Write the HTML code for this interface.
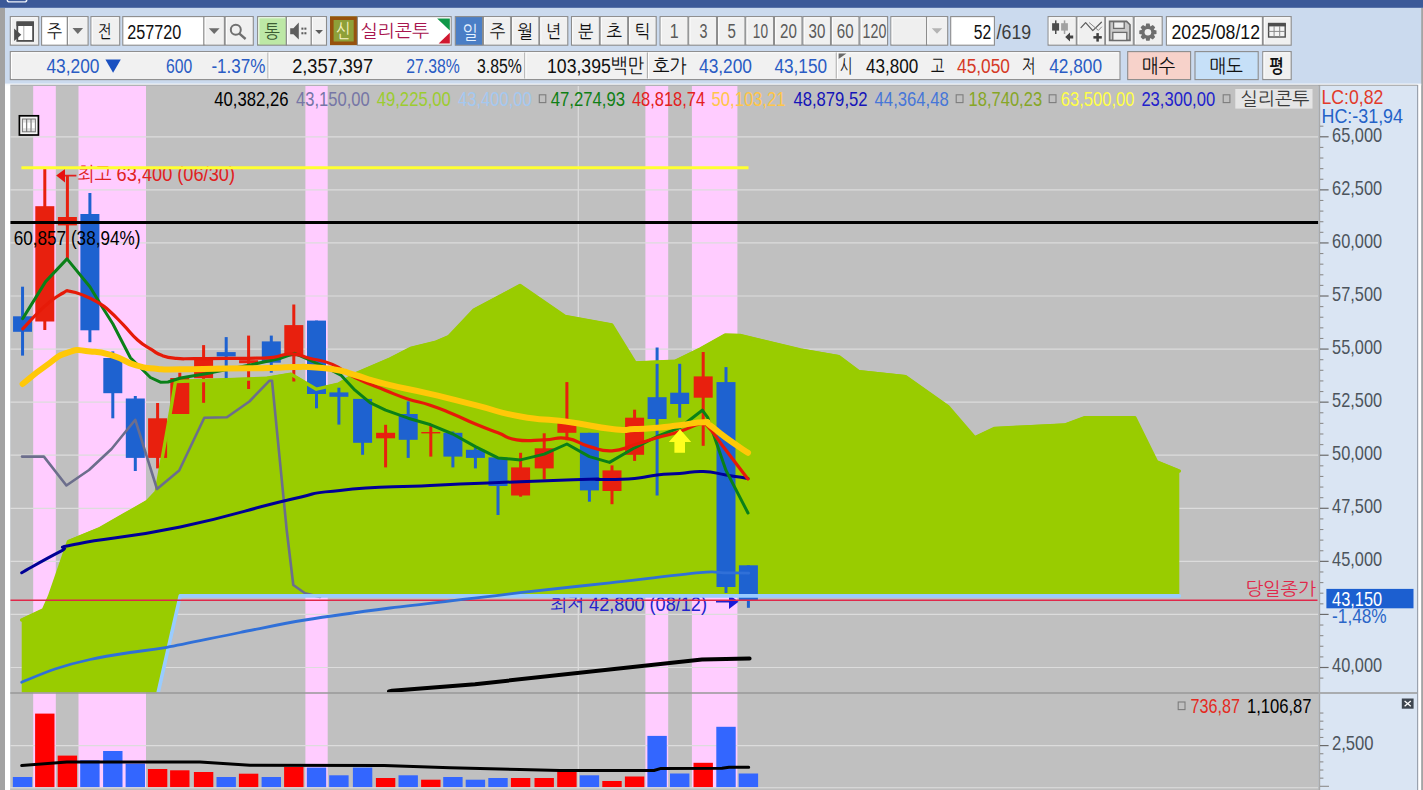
<!DOCTYPE html>
<html lang="ko"><head><meta charset="utf-8"><title>실리콘투 차트</title>
<style>
html,body{margin:0;padding:0;background:#c8d8ec;overflow:hidden}
svg{display:block;font-family:"Liberation Sans", "NanumGothic", sans-serif;}
text{white-space:pre}
</style></head><body>
<svg width="1423" height="790" viewBox="0 0 1423 790">
<rect x="0.00" y="0.00" width="1423.00" height="790.00" fill="#cbdaee" />
<rect x="0.00" y="0.00" width="1423.00" height="7.80" fill="#3b5998" />
<rect x="0.00" y="8.00" width="5.00" height="782.00" fill="#a2a2a2" />
<rect x="5.00" y="84.00" width="5.50" height="706.00" fill="#ffffff" />
<rect x="1417.60" y="84.00" width="3.80" height="706.00" fill="#ffffff" />
<rect x="1421.20" y="8.00" width="2.00" height="782.00" fill="#a4a4a4" />
<rect x="5.00" y="83.60" width="1416.20" height="1.80" fill="#f8fafd" />
<rect x="10.30" y="86.00" width="1308.20" height="704.00" fill="#c0c0c0" />
<rect x="1318.50" y="85.00" width="99.00" height="705.00" fill="#dae5f3" />
<rect x="33.20" y="86.00" width="22.60" height="701.30" fill="#ffccff" />
<rect x="78.50" y="86.00" width="67.50" height="701.30" fill="#ffccff" />
<rect x="305.40" y="86.00" width="22.30" height="701.30" fill="#ffccff" />
<rect x="645.40" y="86.00" width="22.80" height="701.30" fill="#ffccff" />
<rect x="691.90" y="86.00" width="45.50" height="701.30" fill="#ffccff" />
<line x1="10.30" y1="136.80" x2="1318.50" y2="136.80" stroke="#dcdcdc" stroke-width="1.2" />
<line x1="10.30" y1="189.87" x2="1318.50" y2="189.87" stroke="#dcdcdc" stroke-width="1.2" />
<line x1="10.30" y1="242.94" x2="1318.50" y2="242.94" stroke="#dcdcdc" stroke-width="1.2" />
<line x1="10.30" y1="296.01" x2="1318.50" y2="296.01" stroke="#dcdcdc" stroke-width="1.2" />
<line x1="10.30" y1="349.08" x2="1318.50" y2="349.08" stroke="#dcdcdc" stroke-width="1.2" />
<line x1="10.30" y1="402.15" x2="1318.50" y2="402.15" stroke="#dcdcdc" stroke-width="1.2" />
<line x1="10.30" y1="455.22" x2="1318.50" y2="455.22" stroke="#dcdcdc" stroke-width="1.2" />
<line x1="10.30" y1="508.29" x2="1318.50" y2="508.29" stroke="#dcdcdc" stroke-width="1.2" />
<line x1="10.30" y1="561.36" x2="1318.50" y2="561.36" stroke="#dcdcdc" stroke-width="1.2" />
<line x1="10.30" y1="614.43" x2="1318.50" y2="614.43" stroke="#dcdcdc" stroke-width="1.2" />
<line x1="10.30" y1="667.50" x2="1318.50" y2="667.50" stroke="#dcdcdc" stroke-width="1.2" />
<line x1="10.30" y1="745.60" x2="1318.50" y2="745.60" stroke="#dcdcdc" stroke-width="1.2" />
<line x1="578.30" y1="86.00" x2="578.30" y2="787.30" stroke="#dcdcdc" stroke-width="1.2" />
<clipPath id="pp"><rect x="10.3" y="86" width="1308.2" height="606.5"/></clipPath>
<g clip-path="url(#pp)">
<polygon points="21.7,618.5 43.4,608.4 49.4,595.0 68.4,540.0 100.0,527.0 123.5,513.6 146.8,500.3 156.2,490.3 170.2,411.8 175.5,380.0 267.0,376.8 291.0,372.7 316.4,387.7 338.4,382.7 355.0,372.6 390.0,357.6 410.5,347.0 435.0,341.0 449.0,335.0 474.0,308.5 520.0,284.0 565.0,315.0 611.8,323.4 635.2,361.5 675.2,359.8 700.3,347.5 725.3,333.6 740.0,334.0 800.4,348.4 838.8,355.1 858.8,370.1 905.5,375.1 948.0,405.2 974.7,436.2 994.7,426.9 1064.8,423.5 1084.8,416.2 1134.9,416.2 1156.6,460.2 1179.3,469.6 1179.3,595.7 180.2,595.7 158.5,691.0 150.0,730.0 21.7,730.0" fill="#99cc00" />
<text x="77.30" y="181.20" textLength="157.70" lengthAdjust="spacingAndGlyphs" font-size="19.6" fill="#e02020" >최고 63,400 (06/30)</text>
<polygon points="56.2,175.6 65.0,169.0 65.0,182.5" fill="#e81010" />
<line x1="65.00" y1="175.60" x2="76.40" y2="175.60" stroke="#e02020" stroke-width="1.6" />
<text x="550.00" y="610.80" textLength="157.00" lengthAdjust="spacingAndGlyphs" font-size="19.6" fill="#2222cc" >최저 42,800 (08/12)</text>
<line x1="716.00" y1="601.80" x2="730.00" y2="601.80" stroke="#2222cc" stroke-width="1.6" />
<polygon points="738.5,601.8 729.0,594.5 729.0,609.0" fill="#1a1ad8" />
<rect x="21.05" y="286.70" width="3.00" height="68.90" fill="#1e62d0" />
<rect x="13.05" y="316.30" width="19.00" height="15.50" fill="#1e62d0" />
<rect x="43.30" y="169.00" width="3.00" height="161.00" fill="#e8200e" />
<rect x="35.30" y="206.20" width="19.00" height="115.30" fill="#e8200e" />
<rect x="65.90" y="176.00" width="3.00" height="83.00" fill="#e8200e" />
<rect x="57.90" y="217.00" width="19.00" height="8.40" fill="#e8200e" />
<rect x="88.40" y="193.00" width="3.00" height="149.20" fill="#1e62d0" />
<rect x="80.40" y="214.00" width="19.00" height="116.30" fill="#1e62d0" />
<rect x="111.30" y="351.40" width="3.00" height="66.90" fill="#1e62d0" />
<rect x="103.30" y="358.00" width="19.00" height="35.20" fill="#1e62d0" />
<rect x="133.80" y="396.00" width="3.00" height="75.00" fill="#1e62d0" />
<rect x="125.80" y="398.50" width="19.00" height="59.40" fill="#1e62d0" />
<rect x="156.10" y="403.00" width="3.00" height="65.40" fill="#e8200e" />
<rect x="148.10" y="418.30" width="19.00" height="39.60" fill="#e8200e" />
<rect x="178.30" y="372.70" width="3.00" height="41.30" fill="#e8200e" />
<rect x="170.30" y="378.00" width="19.00" height="36.00" fill="#e8200e" />
<rect x="202.10" y="345.10" width="3.00" height="57.70" fill="#e8200e" />
<rect x="194.10" y="357.20" width="19.00" height="21.00" fill="#e8200e" />
<rect x="224.70" y="337.10" width="3.00" height="42.60" fill="#1e62d0" />
<rect x="216.70" y="352.10" width="19.00" height="4.30" fill="#1e62d0" />
<rect x="247.10" y="335.60" width="3.00" height="53.40" fill="#e8200e" />
<rect x="239.10" y="360.20" width="19.00" height="3.00" fill="#e8200e" />
<rect x="269.80" y="335.60" width="3.00" height="37.10" fill="#1e62d0" />
<rect x="261.80" y="341.40" width="19.00" height="21.30" fill="#1e62d0" />
<rect x="292.30" y="304.50" width="3.00" height="77.00" fill="#e8200e" />
<rect x="284.30" y="325.10" width="19.00" height="31.30" fill="#e8200e" />
<rect x="315.00" y="320.60" width="3.00" height="87.70" fill="#1e62d0" />
<rect x="307.00" y="320.60" width="19.00" height="73.40" fill="#1e62d0" />
<rect x="337.40" y="387.70" width="3.00" height="36.90" fill="#1e62d0" />
<rect x="329.40" y="392.40" width="19.00" height="4.40" fill="#1e62d0" />
<rect x="361.10" y="398.90" width="3.00" height="55.90" fill="#1e62d0" />
<rect x="353.10" y="398.90" width="19.00" height="43.90" fill="#1e62d0" />
<rect x="384.10" y="424.80" width="3.00" height="42.60" fill="#e8200e" />
<rect x="376.10" y="432.80" width="19.00" height="5.50" fill="#e8200e" />
<rect x="406.70" y="401.40" width="3.00" height="56.50" fill="#1e62d0" />
<rect x="398.70" y="414.00" width="19.00" height="25.80" fill="#1e62d0" />
<rect x="429.30" y="424.00" width="3.00" height="32.60" fill="#e8200e" />
<rect x="421.30" y="432.00" width="19.00" height="1.40" fill="#e8200e" />
<rect x="451.40" y="431.50" width="3.00" height="35.90" fill="#1e62d0" />
<rect x="443.40" y="432.80" width="19.00" height="23.80" fill="#1e62d0" />
<rect x="473.90" y="447.80" width="3.00" height="20.60" fill="#1e62d0" />
<rect x="465.90" y="449.80" width="19.00" height="8.10" fill="#1e62d0" />
<rect x="496.50" y="457.40" width="3.00" height="57.60" fill="#1e62d0" />
<rect x="488.50" y="457.40" width="19.00" height="28.60" fill="#1e62d0" />
<rect x="519.10" y="452.80" width="3.00" height="43.90" fill="#e8200e" />
<rect x="511.10" y="467.40" width="19.00" height="28.10" fill="#e8200e" />
<rect x="542.70" y="433.30" width="3.00" height="45.90" fill="#e8200e" />
<rect x="534.70" y="448.30" width="19.00" height="20.10" fill="#e8200e" />
<rect x="565.40" y="382.10" width="3.00" height="58.20" fill="#e8200e" />
<rect x="557.40" y="423.30" width="19.00" height="9.50" fill="#e8200e" />
<rect x="587.90" y="432.80" width="3.00" height="68.90" fill="#1e62d0" />
<rect x="579.90" y="432.80" width="19.00" height="57.60" fill="#1e62d0" />
<rect x="610.50" y="465.40" width="3.00" height="38.80" fill="#e8200e" />
<rect x="602.50" y="470.40" width="19.00" height="20.60" fill="#e8200e" />
<rect x="633.10" y="409.70" width="3.00" height="51.20" fill="#e8200e" />
<rect x="625.10" y="417.70" width="19.00" height="37.10" fill="#e8200e" />
<rect x="655.60" y="347.50" width="3.00" height="148.00" fill="#1e62d0" />
<rect x="647.60" y="397.20" width="19.00" height="21.80" fill="#1e62d0" />
<rect x="678.20" y="363.80" width="3.00" height="53.90" fill="#1e62d0" />
<rect x="670.20" y="392.70" width="19.00" height="11.30" fill="#1e62d0" />
<rect x="701.70" y="352.00" width="3.00" height="93.80" fill="#e8200e" />
<rect x="693.70" y="376.40" width="19.00" height="21.30" fill="#e8200e" />
<rect x="724.50" y="367.10" width="3.00" height="225.90" fill="#1e62d0" />
<rect x="716.50" y="382.10" width="19.00" height="204.90" fill="#1e62d0" />
<rect x="746.90" y="565.30" width="3.00" height="42.50" fill="#1e62d0" />
<rect x="738.90" y="565.30" width="19.00" height="35.20" fill="#1e62d0" />
<polyline points="21.7,620.0 43.4,609.9 49.4,596.5 68.4,541.5 100.0,528.5 123.5,515.1 146.8,501.8 156.2,491.8 170.2,413.3 175.5,381.5 267.0,378.3 291.0,374.2 316.4,389.2 338.4,384.2 355.0,374.1 390.0,359.1 410.5,348.5 435.0,342.5 449.0,336.5 474.0,310.0 520.0,285.5 565.0,316.5 611.8,324.9 635.2,363.0 675.2,361.3 700.3,349.0 725.3,335.1 740.0,335.5 800.4,349.9 838.8,356.6 858.8,371.6 905.5,376.6 948.0,406.7 974.7,437.7 994.7,428.4 1064.8,425.0 1084.8,417.7 1134.9,417.7 1156.6,461.7 1179.3,471.1" fill="none" stroke="#99cc00" stroke-width="3.4" stroke-linejoin="round" stroke-linecap="round" />
<polyline points="22.0,456.6 43.9,456.6 66.4,485.5 89.0,470.0 111.5,449.0 135.3,419.8 157.0,489.0 179.2,470.5 204.3,417.8 226.9,417.3 249.4,401.5 269.5,380.7 272.0,380.7 286.7,530.0 293.3,585.0 305.0,593.3 320.0,597.0" fill="none" stroke="#6c6e8c" stroke-width="2.6" stroke-linejoin="round" stroke-linecap="round" />
<polyline points="150.0,730.0 158.5,691.0 180.2,595.9 1179.3,595.9" fill="none" stroke="#99ccff" stroke-width="3.6" stroke-linejoin="round" stroke-linecap="round" stroke-linecap="butt"/>
<line x1="10.30" y1="600.30" x2="1317.50" y2="600.30" stroke="#e0284a" stroke-width="1.4" />
<path d="M21.7 682.2C27.2 680.0 43.6 672.8 55.0 669.0C66.4 665.2 77.6 662.2 90.1 659.5C102.6 656.8 117.2 654.5 130.0 652.5C142.8 650.5 148.6 650.6 166.9 647.3C185.2 644.0 217.0 637.0 240.0 632.5C263.0 628.0 280.0 624.1 305.0 620.0C330.0 615.9 361.8 611.6 390.0 608.0C418.2 604.4 452.6 600.8 474.3 598.2C496.0 595.7 497.4 595.3 520.0 592.7C542.6 590.1 580.0 586.1 610.0 582.8C640.0 579.4 681.0 574.3 700.0 572.6C719.0 570.9 715.9 572.7 724.0 572.8C732.1 572.9 744.6 573.1 748.7 573.2" fill="none" stroke="#3070d8" stroke-width="2.8" stroke-linejoin="round" stroke-linecap="round" />
<path d="M21.7 572.7C31.9 567.1 44.9 559.4 60.0 551.7C75.1 544.0 46.3 550.3 78.4 543.7C110.5 537.1 124.6 538.6 180.2 527.0C235.8 515.4 244.4 510.1 287.0 500.3C329.6 490.5 301.9 494.4 340.0 490.4C378.1 486.4 381.9 487.7 430.0 485.4C478.1 483.1 478.0 483.4 520.5 481.7C563.0 480.0 568.2 479.8 589.4 479.2C610.6 478.6 587.9 479.8 600.0 479.6C612.1 479.4 619.4 479.7 634.6 478.4C649.8 477.1 645.0 476.2 657.0 474.9C669.0 473.6 667.4 474.3 679.7 473.4C692.0 472.5 691.0 471.2 703.3 471.6C715.6 472.0 714.1 473.1 726.0 474.9C737.9 476.7 742.1 477.5 748.0 478.4" fill="none" stroke="#000096" stroke-width="3" stroke-linejoin="round" stroke-linecap="round" />
<polyline points="22.7,318.6 45.6,281.6 67.0,258.9 89.9,286.7 100.8,304.7 112.8,323.8 130.4,357.7 150.4,377.5 160.4,382.2 168.0,382.0 180.5,378.0 213.0,372.4 250.0,365.0 281.0,358.2 294.6,353.3 309.4,360.0 327.0,368.0 341.3,375.4 355.0,390.2 370.0,402.7 385.6,410.2 408.2,418.2 430.8,424.8 452.8,434.0 475.4,446.6 498.0,457.9 520.5,459.9 544.3,454.1 566.9,444.0 589.4,456.6 609.5,462.4 634.6,447.8 657.0,436.5 679.7,427.7 702.3,410.2 707.8,417.7 726.0,470.4 748.0,513.0" fill="none" stroke="#0a8018" stroke-width="3" stroke-linejoin="round" stroke-linecap="round" />
<path d="M22.8 328.8C28.8 322.6 34.7 315.1 45.4 305.6C56.1 296.1 56.5 296.8 63.1 293.0C69.7 289.2 64.5 290.7 70.2 291.4C75.9 292.1 76.8 292.7 84.4 295.7C92.0 298.7 92.0 298.8 98.6 302.8C105.2 306.8 102.6 304.8 109.2 310.7C115.8 316.6 115.8 317.1 123.4 324.9C131.0 332.7 130.1 333.4 137.6 340.0C145.1 346.6 145.1 345.5 151.7 349.7C158.3 353.9 155.7 353.3 162.3 355.6C168.9 357.9 168.0 357.6 176.5 358.4C185.0 359.2 181.1 358.6 194.2 358.6C207.3 358.6 209.1 358.5 225.6 358.4C242.1 358.3 243.3 358.5 256.0 358.2C268.7 357.9 263.8 358.5 273.3 357.3C282.8 356.1 282.1 353.6 291.7 353.8C301.3 354.0 298.5 355.4 309.4 358.2C320.3 361.0 320.3 359.2 332.5 364.4C344.7 369.6 341.0 370.7 355.0 377.6C369.0 384.5 370.9 384.5 385.0 390.2C399.1 395.9 395.6 394.9 407.7 398.9C419.8 402.9 418.2 401.2 430.2 405.2C442.2 409.2 440.7 409.0 452.8 414.0C464.9 419.0 463.3 419.0 475.4 424.0C487.5 429.0 487.0 428.6 498.0 432.8C509.0 437.0 504.4 437.9 516.7 439.8C529.0 441.7 530.9 440.2 544.3 439.8C557.7 439.4 554.9 436.5 566.9 438.3C578.9 440.1 577.4 443.3 589.4 446.6C601.4 449.9 599.9 451.3 612.0 450.8C624.1 450.3 622.6 448.3 634.6 444.8C646.6 441.3 645.0 441.3 657.0 437.8C669.0 434.3 668.2 435.2 679.7 431.5C691.2 427.8 692.5 425.3 700.0 424.0C707.5 422.7 700.9 419.5 707.8 426.5C714.7 433.5 715.3 436.3 726.0 450.3C736.7 464.3 742.1 471.4 748.0 479.1" fill="none" stroke="#e61a08" stroke-width="3.2" stroke-linejoin="round" stroke-linecap="round" />
<path d="M22.6 384.0C29.4 378.7 31.6 375.8 45.1 366.4C58.6 357.0 54.2 357.1 67.7 352.6C81.2 348.1 76.7 350.5 90.2 351.4C103.7 352.3 99.2 351.5 112.8 355.6C126.4 359.7 121.9 361.2 135.4 365.2C148.9 369.2 144.4 367.7 157.9 368.9C171.4 370.1 160.2 369.3 180.5 369.2C200.8 369.1 198.5 368.9 225.6 368.5C252.7 368.1 250.4 368.4 270.7 368.0C291.0 367.6 279.7 367.1 293.3 367.0C306.9 366.9 302.4 366.5 315.9 367.5C329.4 368.5 326.7 367.9 338.4 370.2C350.1 372.4 341.0 370.9 355.0 375.0C369.0 379.1 362.5 378.2 385.0 383.9C407.5 389.6 402.9 387.5 430.0 393.9C457.1 400.3 448.2 398.4 475.4 405.2C502.5 412.0 493.4 411.6 520.5 416.5C547.6 421.4 538.1 417.8 565.6 421.5C593.1 425.2 591.3 426.8 612.0 429.0C632.7 431.2 621.1 429.4 634.6 429.0C648.1 428.6 643.5 428.8 657.0 427.7C670.5 426.6 665.8 426.8 679.7 425.2C693.6 423.6 694.2 422.2 703.3 422.2C712.4 422.2 703.2 420.5 710.0 425.2C716.8 429.9 714.6 429.5 726.0 437.8C737.4 446.1 741.4 448.3 748.0 452.8" fill="none" stroke="#ffc808" stroke-width="6" stroke-linejoin="round" stroke-linecap="round" />
<polyline points="389.0,691.4 392.0,690.8 475.0,684.2 702.0,659.5 749.6,658.5" fill="none" stroke="#000000" stroke-width="4" stroke-linejoin="round" stroke-linecap="round" />
<polygon points="680.0,429.3 691.2,442.0 685.0,442.0 685.0,452.7 674.4,452.7 674.4,442.0 668.8,442.0" fill="#ffff1e" />
<line x1="21.40" y1="167.80" x2="748.50" y2="167.80" stroke="#ffff30" stroke-width="3" />
<line x1="10.30" y1="222.60" x2="1318.50" y2="222.60" stroke="#000000" stroke-width="3" />
<text x="13.70" y="245.20" textLength="126.80" lengthAdjust="spacingAndGlyphs" font-size="19.8" fill="#000000" >60,857 (38,94%)</text>
</g>
<line x1="10.30" y1="693.00" x2="1417.50" y2="693.00" stroke="#999999" stroke-width="1.3" />
<rect x="12.85" y="777.00" width="19.40" height="10.30" fill="#3366ff" />
<rect x="35.10" y="713.60" width="19.40" height="73.70" fill="#ff0000" />
<rect x="57.70" y="755.60" width="19.40" height="31.70" fill="#ff0000" />
<rect x="80.20" y="760.30" width="19.40" height="27.00" fill="#3366ff" />
<rect x="103.10" y="751.00" width="19.40" height="36.30" fill="#3366ff" />
<rect x="125.60" y="763.60" width="19.40" height="23.70" fill="#3366ff" />
<rect x="147.90" y="769.00" width="19.40" height="18.30" fill="#ff0000" />
<rect x="170.10" y="770.30" width="19.40" height="17.00" fill="#ff0000" />
<rect x="193.90" y="772.00" width="19.40" height="15.30" fill="#ff0000" />
<rect x="216.50" y="777.00" width="19.40" height="10.30" fill="#3366ff" />
<rect x="238.90" y="773.70" width="19.40" height="13.60" fill="#ff0000" />
<rect x="261.60" y="777.00" width="19.40" height="10.30" fill="#3366ff" />
<rect x="284.10" y="767.00" width="19.40" height="20.30" fill="#ff0000" />
<rect x="306.80" y="767.60" width="19.40" height="19.70" fill="#3366ff" />
<rect x="329.20" y="775.30" width="19.40" height="12.00" fill="#3366ff" />
<rect x="352.90" y="767.60" width="19.40" height="19.70" fill="#3366ff" />
<rect x="375.90" y="778.00" width="19.40" height="9.30" fill="#ff0000" />
<rect x="398.50" y="775.30" width="19.40" height="12.00" fill="#3366ff" />
<rect x="421.10" y="779.70" width="19.40" height="7.60" fill="#ff0000" />
<rect x="443.20" y="777.00" width="19.40" height="10.30" fill="#3366ff" />
<rect x="465.70" y="779.70" width="19.40" height="7.60" fill="#3366ff" />
<rect x="488.30" y="778.00" width="19.40" height="9.30" fill="#3366ff" />
<rect x="510.90" y="778.00" width="19.40" height="9.30" fill="#ff0000" />
<rect x="534.50" y="778.00" width="19.40" height="9.30" fill="#ff0000" />
<rect x="557.20" y="771.00" width="19.40" height="16.30" fill="#ff0000" />
<rect x="579.70" y="775.30" width="19.40" height="12.00" fill="#3366ff" />
<rect x="602.30" y="781.00" width="19.40" height="6.30" fill="#ff0000" />
<rect x="624.90" y="776.50" width="19.40" height="10.80" fill="#ff0000" />
<rect x="647.40" y="735.90" width="19.40" height="51.40" fill="#3366ff" />
<rect x="670.00" y="773.50" width="19.40" height="13.80" fill="#3366ff" />
<rect x="693.50" y="762.80" width="19.40" height="24.50" fill="#ff0000" />
<rect x="716.30" y="726.80" width="19.40" height="60.50" fill="#3366ff" />
<rect x="738.70" y="773.50" width="19.40" height="13.80" fill="#3366ff" />
<polyline points="21.7,765.6 66.8,762.0 200.0,762.0 250.0,765.3 384.0,765.6 450.0,767.8 520.0,769.4 560.0,770.4 654.0,770.5 661.0,768.4 722.0,768.3 729.0,767.2 748.7,767.2" fill="none" stroke="#000000" stroke-width="3" stroke-linejoin="round" stroke-linecap="round" />
<line x1="10.30" y1="787.90" x2="1318.50" y2="787.90" stroke="#dedede" stroke-width="1.2" />
<rect x="10.30" y="788.60" width="1308.20" height="2.00" fill="#bcbcbc" />
<rect x="10.30" y="16.60" width="28.40" height="28.60" fill="#f0f0f0" stroke="#8c8c8c" stroke-width="1.1" />
<path d="M11.50 44.00V17.80H37.50" fill="none" stroke="#ffffff" stroke-width="1.1" opacity="0.85"/>
<rect x="17.30" y="22.30" width="15.80" height="18.60" fill="#ffffff" stroke="#4e4e4e" stroke-width="1.8" />
<rect x="16.60" y="21.60" width="17.20" height="4.40" fill="#4e4e4e" />
<line x1="23.80" y1="26.00" x2="23.80" y2="40.00" stroke="#b0b0b0" stroke-width="1" />
<polygon points="14.1,28.4 21.3,34.8 14.1,41.1" fill="#4e4e4e" />
<rect x="41.60" y="16.60" width="25.80" height="28.60" fill="#ffffff" stroke="#8c8c8c" stroke-width="1.1" />
<text x="46.80" y="38.00" textLength="15.20" lengthAdjust="spacingAndGlyphs" font-size="18.2" fill="#101010" >주</text>
<rect x="67.40" y="16.60" width="20.70" height="28.60" fill="#f0f0f0" stroke="#8c8c8c" stroke-width="1.1" />
<path d="M68.60 44.00V17.80H86.90" fill="none" stroke="#ffffff" stroke-width="1.1" opacity="0.85"/>
<polygon points="72.5,28.1 83.1,28.1 77.8,33.9" fill="#6c6c6c" />
<rect x="91.00" y="16.60" width="28.70" height="28.60" fill="#f0f0f0" stroke="#8c8c8c" stroke-width="1.1" />
<path d="M92.20 44.00V17.80H118.50" fill="none" stroke="#ffffff" stroke-width="1.1" opacity="0.85"/>
<text x="98.20" y="38.30" textLength="13.50" lengthAdjust="spacingAndGlyphs" font-size="18.2" fill="#101010" >전</text>
<rect x="122.80" y="16.60" width="81.20" height="28.60" fill="#ffffff" stroke="#8c8c8c" stroke-width="1.1" />
<text x="127.30" y="38.50" textLength="54.00" lengthAdjust="spacingAndGlyphs" font-size="20" fill="#101010" >257720</text>
<rect x="204.00" y="16.60" width="20.40" height="28.60" fill="#f0f0f0" stroke="#8c8c8c" stroke-width="1.1" />
<path d="M205.20 44.00V17.80H223.20" fill="none" stroke="#ffffff" stroke-width="1.1" opacity="0.85"/>
<polygon points="208.8,28.2 219.6,28.2 214.2,34.0" fill="#6c6c6c" />
<rect x="225.20" y="16.60" width="28.10" height="28.60" fill="#f0f0f0" stroke="#8c8c8c" stroke-width="1.1" />
<path d="M226.40 44.00V17.80H252.10" fill="none" stroke="#ffffff" stroke-width="1.1" opacity="0.85"/>
<circle cx="235.8" cy="29.8" r="5" fill="none" stroke="#707070" stroke-width="2"/>
<line x1="239.40" y1="33.60" x2="245.60" y2="39.00" stroke="#707070" stroke-width="2.4" />
<rect x="257.60" y="16.60" width="28.80" height="28.60" fill="#bde8a6" stroke="#8c8c8c" stroke-width="1.1" />
<path d="M258.80 44.00V17.80H285.20" fill="none" stroke="#ffffff" stroke-width="1.1" opacity="0.85"/>
<text x="264.30" y="37.80" textLength="15.50" lengthAdjust="spacingAndGlyphs" font-size="18.2" fill="#3c5c34" >통</text>
<rect x="286.40" y="16.60" width="24.90" height="28.60" fill="#f0f0f0" stroke="#8c8c8c" stroke-width="1.1" />
<path d="M287.60 44.00V17.80H310.10" fill="none" stroke="#ffffff" stroke-width="1.1" opacity="0.85"/>
<polygon points="290.2,28.2 293.4,28.2 298.8,22.6 298.8,39.6 293.4,34.2 290.2,34.2" fill="#5e5e5e" />
<rect x="301.40" y="27.60" width="2.00" height="2.10" fill="#5e5e5e" />
<rect x="304.40" y="27.60" width="2.00" height="2.10" fill="#5e5e5e" />
<rect x="301.40" y="32.20" width="2.00" height="2.10" fill="#5e5e5e" />
<rect x="304.40" y="32.20" width="2.00" height="2.10" fill="#5e5e5e" />
<rect x="311.30" y="16.60" width="15.20" height="28.60" fill="#f0f0f0" stroke="#8c8c8c" stroke-width="1.1" />
<path d="M312.50 44.00V17.80H325.30" fill="none" stroke="#ffffff" stroke-width="1.1" opacity="0.85"/>
<polygon points="315.2,29.9 323.0,29.9 319.1,34.1" fill="#5c5c5c" />
<rect x="330.00" y="16.40" width="27.30" height="28.70" fill="#8ea038" />
<rect x="331.80" y="18.20" width="23.70" height="25.10" fill="none" stroke="#96520e" stroke-width="3.6" />
<text x="336.10" y="37.50" textLength="14.20" lengthAdjust="spacingAndGlyphs" font-size="19.6" fill="#f6f2c4" >신</text>
<rect x="357.40" y="16.60" width="93.80" height="28.60" fill="#ffffff" stroke="#8c8c8c" stroke-width="1.1" />
<text x="360.40" y="36.70" textLength="68.90" lengthAdjust="spacingAndGlyphs" font-size="17.4" fill="#a8144e" >실리콘투</text>
<polygon points="437.1,18.6 449.8,18.6 449.8,30.6" fill="#109848" />
<polygon points="449.8,32.8 449.8,43.4 438.6,43.4" fill="#d01830" />
<rect x="455.30" y="16.60" width="27.30" height="28.60" fill="#4a7ec6" stroke="#8c8c8c" stroke-width="1.1" />
<text x="462.40" y="38.60" textLength="15.20" lengthAdjust="spacingAndGlyphs" font-size="18.6" fill="#e6f2ff" >일</text>
<rect x="483.40" y="16.60" width="27.30" height="28.60" fill="#f0f0f0" stroke="#8c8c8c" stroke-width="1.1" />
<path d="M484.60 44.00V17.80H509.50" fill="none" stroke="#ffffff" stroke-width="1.1" opacity="0.85"/>
<text x="489.40" y="37.90" textLength="15.70" lengthAdjust="spacingAndGlyphs" font-size="18.2" fill="#101010" >주</text>
<rect x="511.50" y="16.60" width="27.40" height="28.60" fill="#f0f0f0" stroke="#8c8c8c" stroke-width="1.1" />
<path d="M512.70 44.00V17.80H537.70" fill="none" stroke="#ffffff" stroke-width="1.1" opacity="0.85"/>
<text x="517.50" y="37.90" textLength="15.70" lengthAdjust="spacingAndGlyphs" font-size="18.2" fill="#101010" >월</text>
<rect x="539.60" y="16.60" width="28.20" height="28.60" fill="#f0f0f0" stroke="#8c8c8c" stroke-width="1.1" />
<path d="M540.80 44.00V17.80H566.60" fill="none" stroke="#ffffff" stroke-width="1.1" opacity="0.85"/>
<text x="546.00" y="37.90" textLength="15.50" lengthAdjust="spacingAndGlyphs" font-size="18.2" fill="#101010" >년</text>
<rect x="571.50" y="16.60" width="27.90" height="28.60" fill="#f0f0f0" stroke="#8c8c8c" stroke-width="1.1" />
<path d="M572.70 44.00V17.80H598.20" fill="none" stroke="#ffffff" stroke-width="1.1" opacity="0.85"/>
<text x="577.70" y="37.90" textLength="15.50" lengthAdjust="spacingAndGlyphs" font-size="18.2" fill="#101010" >분</text>
<rect x="600.20" y="16.60" width="27.50" height="28.60" fill="#f0f0f0" stroke="#8c8c8c" stroke-width="1.1" />
<path d="M601.40 44.00V17.80H626.50" fill="none" stroke="#ffffff" stroke-width="1.1" opacity="0.85"/>
<text x="606.30" y="37.90" textLength="15.60" lengthAdjust="spacingAndGlyphs" font-size="18.2" fill="#101010" >초</text>
<rect x="628.50" y="16.60" width="27.70" height="28.60" fill="#f0f0f0" stroke="#8c8c8c" stroke-width="1.1" />
<path d="M629.70 44.00V17.80H655.00" fill="none" stroke="#ffffff" stroke-width="1.1" opacity="0.85"/>
<text x="634.60" y="37.90" textLength="15.60" lengthAdjust="spacingAndGlyphs" font-size="18.2" fill="#101010" >틱</text>
<rect x="660.10" y="16.60" width="27.90" height="28.60" fill="#f0f0f0" stroke="#8c8c8c" stroke-width="1.1" />
<path d="M661.30 44.00V17.80H686.80" fill="none" stroke="#ffffff" stroke-width="1.1" opacity="0.85"/>
<text x="674.10" y="38.4" text-anchor="middle" font-size="19.6" fill="#5a5a5a" transform="translate(121.45 0) scale(0.82 1)">1</text>
<rect x="688.80" y="16.60" width="27.80" height="28.60" fill="#f0f0f0" stroke="#8c8c8c" stroke-width="1.1" />
<path d="M690.00 44.00V17.80H715.40" fill="none" stroke="#ffffff" stroke-width="1.1" opacity="0.85"/>
<text x="699.40" y="38.40" textLength="8.00" lengthAdjust="spacingAndGlyphs" font-size="19.6" fill="#5a5a5a" >3</text>
<rect x="717.50" y="16.60" width="27.50" height="28.60" fill="#f0f0f0" stroke="#8c8c8c" stroke-width="1.1" />
<path d="M718.70 44.00V17.80H743.80" fill="none" stroke="#ffffff" stroke-width="1.1" opacity="0.85"/>
<text x="727.60" y="38.40" textLength="8.40" lengthAdjust="spacingAndGlyphs" font-size="19.6" fill="#5a5a5a" >5</text>
<rect x="745.80" y="16.60" width="27.80" height="28.60" fill="#f0f0f0" stroke="#8c8c8c" stroke-width="1.1" />
<path d="M747.00 44.00V17.80H772.40" fill="none" stroke="#ffffff" stroke-width="1.1" opacity="0.85"/>
<text x="752.80" y="38.40" textLength="15.20" lengthAdjust="spacingAndGlyphs" font-size="19.6" fill="#5a5a5a" >10</text>
<rect x="774.50" y="16.60" width="27.50" height="28.60" fill="#f0f0f0" stroke="#8c8c8c" stroke-width="1.1" />
<path d="M775.70 44.00V17.80H800.80" fill="none" stroke="#ffffff" stroke-width="1.1" opacity="0.85"/>
<text x="780.00" y="38.40" textLength="16.80" lengthAdjust="spacingAndGlyphs" font-size="19.6" fill="#5a5a5a" >20</text>
<rect x="803.00" y="16.60" width="27.50" height="28.60" fill="#f0f0f0" stroke="#8c8c8c" stroke-width="1.1" />
<path d="M804.20 44.00V17.80H829.30" fill="none" stroke="#ffffff" stroke-width="1.1" opacity="0.85"/>
<text x="808.60" y="38.40" textLength="16.80" lengthAdjust="spacingAndGlyphs" font-size="19.6" fill="#5a5a5a" >30</text>
<rect x="831.30" y="16.60" width="27.70" height="28.60" fill="#f0f0f0" stroke="#8c8c8c" stroke-width="1.1" />
<path d="M832.50 44.00V17.80H857.80" fill="none" stroke="#ffffff" stroke-width="1.1" opacity="0.85"/>
<text x="836.80" y="38.40" textLength="16.80" lengthAdjust="spacingAndGlyphs" font-size="19.6" fill="#5a5a5a" >60</text>
<rect x="860.00" y="16.60" width="27.60" height="28.60" fill="#f0f0f0" stroke="#8c8c8c" stroke-width="1.1" />
<path d="M861.20 44.00V17.80H886.40" fill="none" stroke="#ffffff" stroke-width="1.1" opacity="0.85"/>
<text x="862.60" y="38.40" textLength="23.80" lengthAdjust="spacingAndGlyphs" font-size="19.6" fill="#5a5a5a" >120</text>
<rect x="890.90" y="16.60" width="35.70" height="28.60" fill="#efefef" stroke="#8c8c8c" stroke-width="1.1" />
<path d="M892.10 44.00V17.80H925.40" fill="none" stroke="#ffffff" stroke-width="1.1" opacity="0.85"/>
<rect x="926.60" y="16.60" width="21.10" height="28.60" fill="#f0f0f0" stroke="#8c8c8c" stroke-width="1.1" />
<path d="M927.80 44.00V17.80H946.50" fill="none" stroke="#ffffff" stroke-width="1.1" opacity="0.85"/>
<polygon points="931.8,28.2 942.2,28.2 937.0,33.8" fill="#b4b4b4" />
<rect x="950.70" y="16.60" width="43.70" height="28.60" fill="#ffffff" stroke="#8c8c8c" stroke-width="1.1" />
<text x="973.80" y="38.50" textLength="17.40" lengthAdjust="spacingAndGlyphs" font-size="20" fill="#101010" >52</text>
<text x="996.60" y="38.50" textLength="34.60" lengthAdjust="spacingAndGlyphs" font-size="20" fill="#3c3c3c" >/619</text>
<rect x="1048.10" y="16.60" width="28.20" height="28.60" fill="#f0f0f0" stroke="#8c8c8c" stroke-width="1.1" />
<path d="M1049.30 44.00V17.80H1075.10" fill="none" stroke="#ffffff" stroke-width="1.1" opacity="0.85"/>
<rect x="1052.10" y="23.20" width="7.00" height="7.40" fill="#4c4c4c" />
<rect x="1055.00" y="20.40" width="1.50" height="13.60" fill="#4c4c4c" />
<rect x="1061.10" y="23.20" width="6.80" height="7.40" fill="#a2a2a2" />
<rect x="1063.80" y="20.40" width="1.50" height="13.60" fill="#a2a2a2" />
<polygon points="1065.2,37.0 1070.0,32.6 1070.0,35.4 1073.2,35.4 1073.2,38.6 1070.0,38.6 1070.0,41.4" fill="#444444" />
<rect x="1077.00" y="16.60" width="27.80" height="28.60" fill="#f0f0f0" stroke="#8c8c8c" stroke-width="1.1" />
<path d="M1078.20 44.00V17.80H1103.60" fill="none" stroke="#ffffff" stroke-width="1.1" opacity="0.85"/>
<polyline points="1081.0,27.6 1085.6,22.6 1092.8,30.6 1101.4,22.2" fill="none" stroke="#5a5a5a" stroke-width="1.2" stroke-linejoin="round" stroke-linecap="round" />
<polyline points="1089.4,22.8 1098.4,30.4 1101.6,27.0" fill="none" stroke="#8a8a8a" stroke-width="1" stroke-linejoin="round" stroke-linecap="round" />
<rect x="1093.40" y="36.10" width="8.40" height="2.50" fill="#3e3e3e" />
<rect x="1096.35" y="33.10" width="2.50" height="8.50" fill="#3e3e3e" />
<rect x="1105.60" y="16.60" width="27.70" height="28.60" fill="#f0f0f0" stroke="#8c8c8c" stroke-width="1.1" />
<path d="M1106.80 44.00V17.80H1132.10" fill="none" stroke="#ffffff" stroke-width="1.1" opacity="0.85"/>
<path d="M1109.6 21.4H1126.6L1130 24.8V40.4H1109.6Z" fill="#c9c9c9" stroke="#6c6c6c" stroke-width="1.6"/>
<rect x="1113.60" y="21.80" width="10.60" height="6.60" fill="#f0f0f0" stroke="#6c6c6c" stroke-width="1.3" />
<rect x="1112.80" y="32.40" width="14.00" height="8.00" fill="#f0f0f0" stroke="#6c6c6c" stroke-width="1.3" />
<rect x="1134.20" y="16.60" width="28.00" height="28.60" fill="#f0f0f0" stroke="#8c8c8c" stroke-width="1.1" />
<path d="M1135.40 44.00V17.80H1161.00" fill="none" stroke="#ffffff" stroke-width="1.1" opacity="0.85"/>
<polygon points="1156.5,30.5 1156.5,33.9 1153.7,34.6 1153.7,34.6 1155.2,37.1 1152.8,39.5 1150.3,38.0 1150.3,38.0 1149.6,40.8 1146.2,40.8 1145.5,38.0 1145.5,38.0 1143.0,39.5 1140.6,37.1 1142.1,34.6 1142.1,34.6 1139.3,33.9 1139.3,30.5 1142.1,29.8 1142.1,29.8 1140.6,27.3 1143.0,24.9 1145.5,26.4 1145.5,26.4 1146.2,23.6 1149.6,23.6 1150.3,26.4 1150.3,26.4 1152.8,24.9 1155.2,27.3 1153.7,29.8 1153.7,29.8" fill="#6e6e6e" />
<circle cx="1147.9" cy="32.2" r="3.3" fill="#f0f0f0"/>
<rect x="1166.40" y="16.60" width="96.00" height="28.60" fill="#ffffff" stroke="#8c8c8c" stroke-width="1.1" />
<text x="1171.50" y="38.50" textLength="88.50" lengthAdjust="spacingAndGlyphs" font-size="20" fill="#101010" >2025/08/12</text>
<rect x="1263.20" y="16.60" width="28.00" height="28.60" fill="#f0f0f0" stroke="#8c8c8c" stroke-width="1.1" />
<path d="M1264.40 44.00V17.80H1290.00" fill="none" stroke="#ffffff" stroke-width="1.1" opacity="0.85"/>
<rect x="1268.60" y="24.00" width="16.60" height="13.00" fill="#f4f4f4" stroke="#4e4e4e" stroke-width="1.4" />
<rect x="1268.00" y="22.80" width="17.80" height="3.60" fill="#4e4e4e" />
<line x1="1274.10" y1="26.00" x2="1274.10" y2="37.00" stroke="#8a8a8a" stroke-width="1" />
<line x1="1279.70" y1="26.00" x2="1279.70" y2="37.00" stroke="#8a8a8a" stroke-width="1" />
<line x1="1268.60" y1="31.40" x2="1285.20" y2="31.40" stroke="#8a8a8a" stroke-width="1" />
<rect x="10.30" y="51.60" width="1109.70" height="28.00" fill="#f1f1f1" stroke="#8c8c8c" stroke-width="1.1" />
<path d="M11.5 78.39999999999999V52.800000000000004H1118.8" fill="none" stroke="#ffffff" stroke-width="1.1"/>
<line x1="268.00" y1="52.60" x2="268.00" y2="78.60" stroke="#a8a8a8" stroke-width="1.1" />
<line x1="269.10" y1="52.60" x2="269.10" y2="78.60" stroke="#ffffff" stroke-width="1.1" />
<line x1="524.80" y1="52.60" x2="524.80" y2="78.60" stroke="#a8a8a8" stroke-width="1.1" />
<line x1="525.90" y1="52.60" x2="525.90" y2="78.60" stroke="#ffffff" stroke-width="1.1" />
<line x1="647.40" y1="52.60" x2="647.40" y2="78.60" stroke="#a8a8a8" stroke-width="1.1" />
<line x1="648.50" y1="52.60" x2="648.50" y2="78.60" stroke="#ffffff" stroke-width="1.1" />
<line x1="836.30" y1="52.60" x2="836.30" y2="78.60" stroke="#a8a8a8" stroke-width="1.1" />
<line x1="837.40" y1="52.60" x2="837.40" y2="78.60" stroke="#ffffff" stroke-width="1.1" />
<text x="46.40" y="72.60" textLength="53.10" lengthAdjust="spacingAndGlyphs" font-size="20" fill="#2a5cc4" >43,200</text>
<polygon points="105.4,59.6 120.8,59.6 113.1,72.8" fill="#1a50c0" />
<text x="166.00" y="72.60" textLength="26.20" lengthAdjust="spacingAndGlyphs" font-size="20" fill="#2a5cc4" >600</text>
<text x="211.40" y="72.60" textLength="54.10" lengthAdjust="spacingAndGlyphs" font-size="20" fill="#2a5cc4" >-1.37%</text>
<text x="292.20" y="72.60" textLength="80.90" lengthAdjust="spacingAndGlyphs" font-size="20" fill="#101010" >2,357,397</text>
<text x="406.30" y="72.60" textLength="53.50" lengthAdjust="spacingAndGlyphs" font-size="20" fill="#2a5cc4" >27.38%</text>
<text x="477.00" y="72.60" textLength="44.80" lengthAdjust="spacingAndGlyphs" font-size="20" fill="#101010" >3.85%</text>
<text x="547.00" y="72.60" textLength="97.00" lengthAdjust="spacingAndGlyphs" font-size="20" fill="#101010" >103,395백만</text>
<text x="652.50" y="72.50" textLength="33.80" lengthAdjust="spacingAndGlyphs" font-size="19.2" fill="#101010" >호가</text>
<text x="699.00" y="72.60" textLength="53.00" lengthAdjust="spacingAndGlyphs" font-size="20" fill="#2a5cc4" >43,200</text>
<text x="774.50" y="72.60" textLength="52.50" lengthAdjust="spacingAndGlyphs" font-size="20" fill="#2a5cc4" >43,150</text>
<polygon points="838.6,53.6 846.4,53.6 838.6,59.0" fill="#6a6a6a" />
<text x="839.70" y="72.50" textLength="12.70" lengthAdjust="spacingAndGlyphs" font-size="19.2" fill="#101010" >시</text>
<text x="865.90" y="72.60" textLength="52.30" lengthAdjust="spacingAndGlyphs" font-size="20" fill="#101010" >43,800</text>
<text x="930.80" y="72.50" textLength="13.50" lengthAdjust="spacingAndGlyphs" font-size="19.2" fill="#101010" >고</text>
<text x="957.00" y="72.60" textLength="53.00" lengthAdjust="spacingAndGlyphs" font-size="20" fill="#d63a26" >45,050</text>
<text x="1021.90" y="72.50" textLength="13.50" lengthAdjust="spacingAndGlyphs" font-size="19.2" fill="#101010" >저</text>
<text x="1049.20" y="72.60" textLength="52.80" lengthAdjust="spacingAndGlyphs" font-size="20" fill="#2a5cc4" >42,800</text>
<rect x="1127.70" y="51.60" width="62.90" height="28.00" fill="#f7d2ca" stroke="#8c8c8c" stroke-width="1.1" />
<text x="1141.70" y="73.00" textLength="33.50" lengthAdjust="spacingAndGlyphs" font-size="19.6" fill="#101010" >매수</text>
<rect x="1195.00" y="51.60" width="63.20" height="28.00" fill="#c6e0f8" stroke="#8c8c8c" stroke-width="1.1" />
<text x="1209.20" y="72.60" textLength="33.50" lengthAdjust="spacingAndGlyphs" font-size="19.2" fill="#101010" >매도</text>
<rect x="1262.80" y="51.60" width="28.40" height="28.00" fill="#f0f0f0" stroke="#8c8c8c" stroke-width="1.1" />
<path d="M1264.00 78.40V52.80H1290.00" fill="none" stroke="#ffffff" stroke-width="1.1" opacity="0.85"/>
<text x="1269.60" y="73.00" textLength="14.30" lengthAdjust="spacingAndGlyphs" font-size="18.8" fill="#101010" font-weight="bold" >평</text>
<rect x="7.2" y="-6" width="19.6" height="7.9" rx="2.4" fill="none" stroke="#eef2fa" stroke-width="1.4"/>
<text x="214.30" y="105.50" textLength="74.30" lengthAdjust="spacingAndGlyphs" font-size="19.8" fill="#000000" >40,382,26</text>
<text x="296.00" y="105.50" textLength="73.70" lengthAdjust="spacingAndGlyphs" font-size="19.8" fill="#7676a6" >43,150,00</text>
<text x="376.70" y="105.50" textLength="74.20" lengthAdjust="spacingAndGlyphs" font-size="19.8" fill="#9ccc30" >49,225,00</text>
<text x="458.00" y="105.50" textLength="73.70" lengthAdjust="spacingAndGlyphs" font-size="19.8" fill="#a4c8f0" >43,400,00</text>
<rect x="539.30" y="94.80" width="6.50" height="7.80" fill="none" stroke="#7c7c7c" stroke-width="1.1" />
<text x="550.70" y="105.50" textLength="74.40" lengthAdjust="spacingAndGlyphs" font-size="19.8" fill="#0f7f14" >47,274,93</text>
<text x="631.90" y="105.50" textLength="73.30" lengthAdjust="spacingAndGlyphs" font-size="19.8" fill="#e42020" >48,818,74</text>
<text x="711.60" y="105.50" textLength="73.80" lengthAdjust="spacingAndGlyphs" font-size="19.8" fill="#ffc648" >50,103,21</text>
<text x="793.40" y="105.50" textLength="74.20" lengthAdjust="spacingAndGlyphs" font-size="19.8" fill="#1414b8" >48,879,52</text>
<text x="874.60" y="105.50" textLength="74.20" lengthAdjust="spacingAndGlyphs" font-size="19.8" fill="#4676d8" >44,364,48</text>
<rect x="956.20" y="94.80" width="6.80" height="7.80" fill="none" stroke="#7c7c7c" stroke-width="1.1" />
<text x="968.60" y="105.50" textLength="73.50" lengthAdjust="spacingAndGlyphs" font-size="19.8" fill="#86a626" >18,740,23</text>
<rect x="1049.20" y="94.80" width="6.80" height="7.80" fill="none" stroke="#7c7c7c" stroke-width="1.1" />
<text x="1060.70" y="105.50" textLength="73.80" lengthAdjust="spacingAndGlyphs" font-size="19.8" fill="#ffff48" >63,500,00</text>
<text x="1141.40" y="105.50" textLength="73.80" lengthAdjust="spacingAndGlyphs" font-size="19.8" fill="#2222cc" >23,300,00</text>
<rect x="1223.20" y="94.80" width="6.70" height="7.80" fill="none" stroke="#7c7c7c" stroke-width="1.1" />
<rect x="1235.30" y="89.00" width="77.20" height="19.60" fill="#e5e5e5" />
<text x="1240.40" y="105.20" textLength="69.30" lengthAdjust="spacingAndGlyphs" font-size="18" fill="#3a3a3a" >실리콘투</text>
<rect x="19.40" y="115.80" width="19.00" height="19.20" fill="#f4f4f4" stroke="#000000" stroke-width="1.7" />
<rect x="22.40" y="119.00" width="13.00" height="12.80" fill="#e0e0e0" stroke="#7a7a7a" stroke-width="1" />
<line x1="26.70" y1="119.00" x2="26.70" y2="131.80" stroke="#6a6a6a" stroke-width="1" />
<line x1="31.00" y1="119.00" x2="31.00" y2="131.80" stroke="#6a6a6a" stroke-width="1" />
<rect x="27.60" y="122.60" width="2.60" height="5.60" fill="#ffffff" />
<rect x="32.00" y="122.60" width="2.60" height="5.60" fill="#ffffff" />
<rect x="23.20" y="122.60" width="2.60" height="5.60" fill="#ffffff" />
<line x1="1319.30" y1="85.00" x2="1319.30" y2="790.00" stroke="#a9a9a9" stroke-width="1.8" />
<line x1="1417.60" y1="85.00" x2="1417.60" y2="790.00" stroke="#9aa2ae" stroke-width="1.2" />
<line x1="10.30" y1="85.30" x2="1417.60" y2="85.30" stroke="#a0a0a0" stroke-width="1.1" />
<line x1="1320.00" y1="136.80" x2="1328.60" y2="136.80" stroke="#6a6a6a" stroke-width="1.2" />
<text x="1332.10" y="141.50" textLength="50.00" lengthAdjust="spacingAndGlyphs" font-size="19.8" fill="#4c545c" >65,000</text>
<line x1="1320.00" y1="189.87" x2="1328.60" y2="189.87" stroke="#6a6a6a" stroke-width="1.2" />
<text x="1332.10" y="194.57" textLength="50.00" lengthAdjust="spacingAndGlyphs" font-size="19.8" fill="#4c545c" >62,500</text>
<line x1="1320.00" y1="242.94" x2="1328.60" y2="242.94" stroke="#6a6a6a" stroke-width="1.2" />
<text x="1332.10" y="247.64" textLength="50.00" lengthAdjust="spacingAndGlyphs" font-size="19.8" fill="#4c545c" >60,000</text>
<line x1="1320.00" y1="296.01" x2="1328.60" y2="296.01" stroke="#6a6a6a" stroke-width="1.2" />
<text x="1332.10" y="300.71" textLength="50.00" lengthAdjust="spacingAndGlyphs" font-size="19.8" fill="#4c545c" >57,500</text>
<line x1="1320.00" y1="349.08" x2="1328.60" y2="349.08" stroke="#6a6a6a" stroke-width="1.2" />
<text x="1332.10" y="353.78" textLength="50.00" lengthAdjust="spacingAndGlyphs" font-size="19.8" fill="#4c545c" >55,000</text>
<line x1="1320.00" y1="402.15" x2="1328.60" y2="402.15" stroke="#6a6a6a" stroke-width="1.2" />
<text x="1332.10" y="406.85" textLength="50.00" lengthAdjust="spacingAndGlyphs" font-size="19.8" fill="#4c545c" >52,500</text>
<line x1="1320.00" y1="455.22" x2="1328.60" y2="455.22" stroke="#6a6a6a" stroke-width="1.2" />
<text x="1332.10" y="459.92" textLength="50.00" lengthAdjust="spacingAndGlyphs" font-size="19.8" fill="#4c545c" >50,000</text>
<line x1="1320.00" y1="508.29" x2="1328.60" y2="508.29" stroke="#6a6a6a" stroke-width="1.2" />
<text x="1332.10" y="512.99" textLength="50.00" lengthAdjust="spacingAndGlyphs" font-size="19.8" fill="#4c545c" >47,500</text>
<line x1="1320.00" y1="561.36" x2="1328.60" y2="561.36" stroke="#6a6a6a" stroke-width="1.2" />
<text x="1332.10" y="566.06" textLength="50.00" lengthAdjust="spacingAndGlyphs" font-size="19.8" fill="#4c545c" >45,000</text>
<line x1="1320.00" y1="614.43" x2="1328.60" y2="614.43" stroke="#6a6a6a" stroke-width="1.2" />
<line x1="1320.00" y1="667.50" x2="1328.60" y2="667.50" stroke="#6a6a6a" stroke-width="1.2" />
<text x="1332.10" y="672.20" textLength="50.00" lengthAdjust="spacingAndGlyphs" font-size="19.8" fill="#4c545c" >40,000</text>
<line x1="1320.00" y1="126.19" x2="1323.40" y2="126.19" stroke="#8c8c8c" stroke-width="1.1" />
<line x1="1320.00" y1="147.41" x2="1323.40" y2="147.41" stroke="#8c8c8c" stroke-width="1.1" />
<line x1="1320.00" y1="158.03" x2="1323.40" y2="158.03" stroke="#8c8c8c" stroke-width="1.1" />
<line x1="1320.00" y1="168.64" x2="1323.40" y2="168.64" stroke="#8c8c8c" stroke-width="1.1" />
<line x1="1320.00" y1="179.26" x2="1323.40" y2="179.26" stroke="#8c8c8c" stroke-width="1.1" />
<line x1="1320.00" y1="200.48" x2="1323.40" y2="200.48" stroke="#8c8c8c" stroke-width="1.1" />
<line x1="1320.00" y1="211.10" x2="1323.40" y2="211.10" stroke="#8c8c8c" stroke-width="1.1" />
<line x1="1320.00" y1="221.71" x2="1323.40" y2="221.71" stroke="#8c8c8c" stroke-width="1.1" />
<line x1="1320.00" y1="232.33" x2="1323.40" y2="232.33" stroke="#8c8c8c" stroke-width="1.1" />
<line x1="1320.00" y1="253.55" x2="1323.40" y2="253.55" stroke="#8c8c8c" stroke-width="1.1" />
<line x1="1320.00" y1="264.17" x2="1323.40" y2="264.17" stroke="#8c8c8c" stroke-width="1.1" />
<line x1="1320.00" y1="274.78" x2="1323.40" y2="274.78" stroke="#8c8c8c" stroke-width="1.1" />
<line x1="1320.00" y1="285.40" x2="1323.40" y2="285.40" stroke="#8c8c8c" stroke-width="1.1" />
<line x1="1320.00" y1="306.62" x2="1323.40" y2="306.62" stroke="#8c8c8c" stroke-width="1.1" />
<line x1="1320.00" y1="317.24" x2="1323.40" y2="317.24" stroke="#8c8c8c" stroke-width="1.1" />
<line x1="1320.00" y1="327.85" x2="1323.40" y2="327.85" stroke="#8c8c8c" stroke-width="1.1" />
<line x1="1320.00" y1="338.47" x2="1323.40" y2="338.47" stroke="#8c8c8c" stroke-width="1.1" />
<line x1="1320.00" y1="359.69" x2="1323.40" y2="359.69" stroke="#8c8c8c" stroke-width="1.1" />
<line x1="1320.00" y1="370.31" x2="1323.40" y2="370.31" stroke="#8c8c8c" stroke-width="1.1" />
<line x1="1320.00" y1="380.92" x2="1323.40" y2="380.92" stroke="#8c8c8c" stroke-width="1.1" />
<line x1="1320.00" y1="391.54" x2="1323.40" y2="391.54" stroke="#8c8c8c" stroke-width="1.1" />
<line x1="1320.00" y1="412.76" x2="1323.40" y2="412.76" stroke="#8c8c8c" stroke-width="1.1" />
<line x1="1320.00" y1="423.38" x2="1323.40" y2="423.38" stroke="#8c8c8c" stroke-width="1.1" />
<line x1="1320.00" y1="433.99" x2="1323.40" y2="433.99" stroke="#8c8c8c" stroke-width="1.1" />
<line x1="1320.00" y1="444.61" x2="1323.40" y2="444.61" stroke="#8c8c8c" stroke-width="1.1" />
<line x1="1320.00" y1="465.83" x2="1323.40" y2="465.83" stroke="#8c8c8c" stroke-width="1.1" />
<line x1="1320.00" y1="476.45" x2="1323.40" y2="476.45" stroke="#8c8c8c" stroke-width="1.1" />
<line x1="1320.00" y1="487.06" x2="1323.40" y2="487.06" stroke="#8c8c8c" stroke-width="1.1" />
<line x1="1320.00" y1="497.68" x2="1323.40" y2="497.68" stroke="#8c8c8c" stroke-width="1.1" />
<line x1="1320.00" y1="518.90" x2="1323.40" y2="518.90" stroke="#8c8c8c" stroke-width="1.1" />
<line x1="1320.00" y1="529.52" x2="1323.40" y2="529.52" stroke="#8c8c8c" stroke-width="1.1" />
<line x1="1320.00" y1="540.13" x2="1323.40" y2="540.13" stroke="#8c8c8c" stroke-width="1.1" />
<line x1="1320.00" y1="550.75" x2="1323.40" y2="550.75" stroke="#8c8c8c" stroke-width="1.1" />
<line x1="1320.00" y1="571.97" x2="1323.40" y2="571.97" stroke="#8c8c8c" stroke-width="1.1" />
<line x1="1320.00" y1="582.59" x2="1323.40" y2="582.59" stroke="#8c8c8c" stroke-width="1.1" />
<line x1="1320.00" y1="593.20" x2="1323.40" y2="593.20" stroke="#8c8c8c" stroke-width="1.1" />
<line x1="1320.00" y1="603.82" x2="1323.40" y2="603.82" stroke="#8c8c8c" stroke-width="1.1" />
<line x1="1320.00" y1="625.04" x2="1323.40" y2="625.04" stroke="#8c8c8c" stroke-width="1.1" />
<line x1="1320.00" y1="635.66" x2="1323.40" y2="635.66" stroke="#8c8c8c" stroke-width="1.1" />
<line x1="1320.00" y1="646.27" x2="1323.40" y2="646.27" stroke="#8c8c8c" stroke-width="1.1" />
<line x1="1320.00" y1="656.89" x2="1323.40" y2="656.89" stroke="#8c8c8c" stroke-width="1.1" />
<line x1="1320.00" y1="678.11" x2="1323.40" y2="678.11" stroke="#8c8c8c" stroke-width="1.1" />
<text x="1321.50" y="104.00" textLength="61.90" lengthAdjust="spacingAndGlyphs" font-size="19.8" fill="#e23a2a" >LC:0,82</text>
<text x="1321.50" y="122.80" textLength="81.50" lengthAdjust="spacingAndGlyphs" font-size="19.8" fill="#2462c8" >HC:-31,94</text>
<text x="1332.10" y="623.30" textLength="54.60" lengthAdjust="spacingAndGlyphs" font-size="19.8" fill="#2a66c8" >-1,48%</text>
<rect x="1326.40" y="588.90" width="87.10" height="19.40" fill="#1c5fd0" />
<text x="1332.10" y="605.60" textLength="50.00" lengthAdjust="spacingAndGlyphs" font-size="19.8" fill="#ffffff" >43,150</text>
<text x="1245.50" y="595.20" textLength="70.20" lengthAdjust="spacingAndGlyphs" font-size="17.8" fill="#e0284a" >당일종가</text>
<line x1="1320.00" y1="745.60" x2="1328.60" y2="745.60" stroke="#6a6a6a" stroke-width="1.2" />
<text x="1331.90" y="750.40" textLength="41.60" lengthAdjust="spacingAndGlyphs" font-size="19.8" fill="#4c545c" >2,500</text>
<line x1="1320.00" y1="713.04" x2="1323.40" y2="713.04" stroke="#8c8c8c" stroke-width="1.1" />
<line x1="1320.00" y1="721.18" x2="1323.40" y2="721.18" stroke="#8c8c8c" stroke-width="1.1" />
<line x1="1320.00" y1="729.32" x2="1323.40" y2="729.32" stroke="#8c8c8c" stroke-width="1.1" />
<line x1="1320.00" y1="737.46" x2="1323.40" y2="737.46" stroke="#8c8c8c" stroke-width="1.1" />
<line x1="1320.00" y1="753.74" x2="1323.40" y2="753.74" stroke="#8c8c8c" stroke-width="1.1" />
<line x1="1320.00" y1="761.88" x2="1323.40" y2="761.88" stroke="#8c8c8c" stroke-width="1.1" />
<line x1="1320.00" y1="770.02" x2="1323.40" y2="770.02" stroke="#8c8c8c" stroke-width="1.1" />
<line x1="1320.00" y1="778.16" x2="1323.40" y2="778.16" stroke="#8c8c8c" stroke-width="1.1" />
<line x1="1320.00" y1="786.30" x2="1329.00" y2="786.30" stroke="#8c8c8c" stroke-width="1.1" />
<rect x="1401.80" y="698.50" width="11.80" height="10.20" fill="#3e4650" />
<line x1="1404.60" y1="700.90" x2="1410.80" y2="706.30" stroke="#ffffff" stroke-width="1.3" />
<line x1="1410.80" y1="700.90" x2="1404.60" y2="706.30" stroke="#ffffff" stroke-width="1.3" />
<rect x="1178.20" y="702.00" width="6.80" height="7.60" fill="none" stroke="#7c7c7c" stroke-width="1.1" />
<text x="1190.50" y="713.00" textLength="49.40" lengthAdjust="spacingAndGlyphs" font-size="19.8" fill="#e42a20" >736,87</text>
<text x="1246.90" y="713.00" textLength="64.70" lengthAdjust="spacingAndGlyphs" font-size="19.8" fill="#000000" >1,106,87</text>
</svg>
</body></html>
